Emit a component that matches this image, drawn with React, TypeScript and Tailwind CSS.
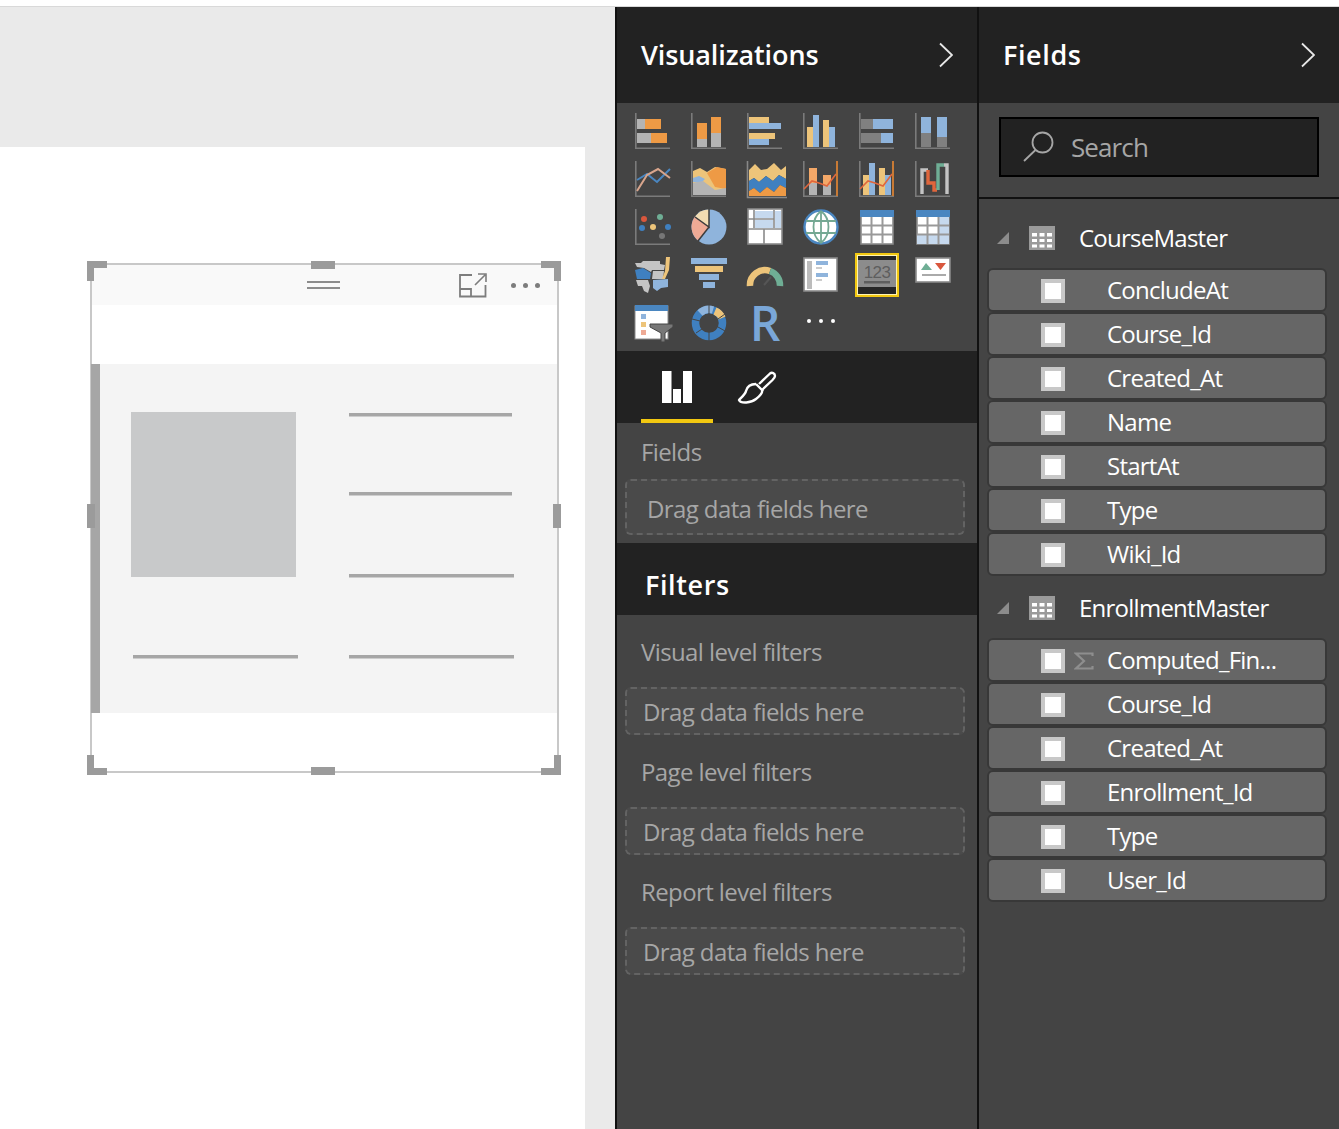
import React from "react";

const Axes = ({ w = 35 }: { w?: number }) => (
  <path d={`M0.8 0V35.2H${w}`} fill="none" stroke="#7b7b7b" strokeWidth="1.6" />
);

const Y = "#edc47a", B = "#8fb4dc", O = "#ee9a45", G = "#b4b4b4", D = "#808080", S = "#eeaa95", BL = "#3f80c0";

const icons: React.ReactNode[] = [
  <><Axes /><rect x="2" y="6" width="24" height="10" fill={O} /><rect x="2" y="6" width="8" height="10" fill={G} /><rect x="2" y="20" width="30" height="10" fill={O} /><rect x="2" y="20" width="14" height="10" fill={G} /></>,
  <><Axes /><rect x="6" y="10" width="10" height="24" fill={O} /><rect x="6" y="26" width="10" height="8" fill={G} /><rect x="20" y="4" width="10" height="30" fill={O} /><rect x="20" y="20" width="10" height="14" fill={G} /></>,
  <><Axes /><rect x="2" y="4" width="20" height="6" fill={Y} /><rect x="2" y="10" width="32" height="6" fill={B} /><rect x="2" y="20" width="26" height="6" fill={Y} /><rect x="2" y="26" width="20" height="6" fill={B} /></>,
  <><Axes /><rect x="4" y="14" width="6" height="20" fill={Y} /><rect x="10" y="2" width="6" height="32" fill={B} /><rect x="20" y="7" width="6" height="27" fill={Y} /><rect x="26" y="14" width="6" height="20" fill={B} /></>,
  <><Axes /><rect x="2" y="6" width="32" height="10" fill={B} /><rect x="2" y="6" width="12" height="10" fill={D} /><rect x="2" y="20" width="32" height="10" fill={B} /><rect x="2" y="20" width="20" height="10" fill={D} /></>,
  <><Axes /><rect x="6" y="4" width="10" height="30" fill={B} /><rect x="6" y="20" width="10" height="14" fill={D} /><rect x="22" y="4" width="10" height="30" fill={B} /><rect x="22" y="24" width="10" height="10" fill={D} /></>,

  <><Axes /><polyline points="2,19 12,13 22,21 35,8" fill="none" stroke="#4a86c0" strokeWidth="2" /><polyline points="2,30 12,14 23,8 35,17" fill="none" stroke="#d8a58c" strokeWidth="2" /></>,
  <><Axes /><polygon points="2,10 9,7 16,11 24,6 35,8 35,34 2,34" fill={Y} /><polygon points="16,12 26,6 35,8 35,28 24,26" fill={O} /><polygon points="2,17 8,15 14,18 10,22 2,21" fill={B} /><polygon points="2,22 12,20 24,29 35,27 35,34 2,34" fill={G} /></>,
  <><path d="M0.5 0V36.5H40" fill="none" stroke="#888" strokeWidth="1.6" /><polygon points="2,9 8,3 14,9 20,8 27,2 34,9 39,5 39,18 32,14 26,20 19,15 12,21 7,17 2,20" fill={Y} /><polygon points="2,20 7,17 12,21 19,15 26,20 32,14 39,18 39,27 33,24 27,31 20,26 13,32 7,27 2,30" fill={BL} /><polygon points="2,30 7,27 13,32 20,26 27,31 33,24 39,27 39,35 2,35" fill={O} /></>,
  <><Axes /><rect x="6" y="7" width="8" height="27" fill="#f4a868" /><rect x="6" y="22" width="8" height="12" fill={G} /><rect x="20" y="14" width="8" height="20" fill="#f4a868" /><rect x="20" y="24" width="8" height="10" fill={G} /><polyline points="1,28 9,20 16,22 24,25 33,13" fill="none" stroke="#e0663c" strokeWidth="1.6" /><rect x="33" y="0" width="2" height="35" fill="#c87a35" /></>,
  <><Axes /><rect x="4" y="14" width="6" height="20" fill={Y} /><rect x="10" y="2" width="6" height="32" fill={B} /><rect x="20" y="7" width="6" height="27" fill={Y} /><rect x="26" y="14" width="6" height="20" fill={B} /><polyline points="1,28 9,20 16,22 24,25 33,13" fill="none" stroke="#e0663c" strokeWidth="1.6" /><rect x="33" y="0" width="2" height="35" fill="#c87a35" /></>,
  <><Axes /><path d="M7 33V9H13" fill="none" stroke="#c4c4c4" strokeWidth="3.4" /><path d="M13 9V22H19V29H22" fill="none" stroke="#e0663c" strokeWidth="3.4" /><path d="M23 29V4H29" fill="none" stroke="#6fae95" strokeWidth="3.4" /><path d="M29 4H32V33" fill="none" stroke="#c4c4c4" strokeWidth="3.4" /></>,

  <><Axes /><circle cx="9" cy="10" r="3" fill="#d9573d" /><circle cx="25" cy="8" r="3" fill="#6fae95" /><circle cx="18" cy="18" r="3" fill={Y} /><circle cx="33" cy="18" r="3" fill="#3f80c0" /><circle cx="7" cy="19" r="3" fill="#3f80c0" /><circle cx="27" cy="27" r="3" fill="#777" /></>,
  <><circle cx="18" cy="18" r="17.5" fill={B} /><path d="M18 18L4 7.5A17.5 17.5 0 0 1 18 0.5Z" fill="#f2dcb2" /><path d="M18 18L7 31.5A17.5 17.5 0 0 1 4 7.5Z" fill={S} /><path d="M18 0V18L4 8" fill="none" stroke="#3d3d3d" strokeWidth="1.5" /><path d="M18 18L7 32" fill="none" stroke="#3d3d3d" strokeWidth="1.5" /></>,
  <><rect x="1" y="0" width="34" height="35" fill="#fff" stroke="#8a8a8a" strokeWidth="1.6" /><rect x="8" y="2" width="18" height="7" fill="#c6d9ee" /><rect x="8" y="11" width="18" height="8" fill="#c6d9ee" /><rect x="28" y="2" width="6" height="17" fill="#c6d9ee" /><path d="M7 1V19M27 1V19M1 10H27M1 20H35M17 20V35" stroke="#8a8a8a" strokeWidth="1.6" /></>,
  <><circle cx="18" cy="18" r="16.5" fill="#fff" stroke="#4a86c0" strokeWidth="2.4" /><path d="M3 12H33M3 24H33M18 2V34M18 2C8 10 8 26 18 34M18 2C28 10 28 26 18 34" fill="none" stroke="#74a893" strokeWidth="1.8" /></>,
  <><rect x="2" y="2" width="32" height="33" fill="#fff" stroke="#8a8a8a" strokeWidth="1.6" /><rect x="1" y="1" width="34" height="7" fill="#4a86c0" /><path d="M12.5 8V35M23.5 8V35M2 16.5H34M2 25.5H34" stroke="#999" strokeWidth="2" /></>,
  <><rect x="2" y="2" width="32" height="33" fill="#fff" stroke="#8a8a8a" strokeWidth="1.6" /><rect x="24" y="8" width="10" height="27" fill="#c6d9ee" /><rect x="2" y="26" width="32" height="9" fill="#c6d9ee" /><rect x="1" y="1" width="34" height="7" fill="#4a86c0" /><path d="M12.5 8V35M23.5 8V35M2 16.5H34M2 25.5H34" stroke="#999" strokeWidth="2" /></>,

  <><polygon points="0,6 6,6 8,4 25,4 25,7 30,8 29,13 17,13 16,15 9,11 2,10" fill="#c4c4c4" /><polygon points="0,13 8,11 16,16 15,22 2,22" fill={BL} /><polygon points="18,14 29,14 28,22 17,22" fill="#c4c4c4" /><polygon points="31,0 35,0 34,13 30,22 27,22 30,14" fill={Y} /><polygon points="1,23 13,23 15,29 13,36 9,34 7,29 3,29" fill="#c4c4c4" /><polygon points="18,23 33,22 33,30 26,31 22,34 18,31" fill={B} /></>,
  <><rect x="0" y="1" width="36" height="6" fill={B} /><rect x="4" y="9" width="28" height="6" fill={Y} /><rect x="8" y="17" width="20" height="6" fill={B} /><rect x="12" y="25" width="12" height="6" fill={B} /></>,
  <><path d="M3 29A15 15 0 0 1 23 14" fill="none" stroke={Y} strokeWidth="6.5" /><path d="M23 14A15 15 0 0 1 33 29" fill="none" stroke="#6fae95" strokeWidth="6.5" /><path d="M17 28L24 20" stroke="#555" strokeWidth="2" /></>,
  <><rect x="1" y="1" width="33" height="33" fill="#fff" stroke="#8a8a8a" strokeWidth="1.6" /><rect x="4" y="4" width="5" height="28" fill="#bcbcbc" /><rect x="13" y="4" width="12" height="4" fill={B} /><rect x="13" y="10" width="6" height="2" fill="#ccc" /><rect x="13" y="16" width="12" height="4" fill={B} /><rect x="13" y="22" width="6" height="2" fill="#ccc" /></>,
  null,
  <><rect x="1" y="1" width="34" height="24" fill="#fff" stroke="#8a8a8a" strokeWidth="1.6" /><polygon points="6,13 11,6 17,13" fill="#6fae95" /><polygon points="20,6 31,6 25.5,13" fill="#d9573d" /><rect x="7" y="17" width="24" height="2" fill="#aaa" /></>,

  <><rect x="0" y="1" width="33" height="33" fill="#fff" stroke="#8a8a8a" strokeWidth="1" /><rect x="0" y="0" width="33" height="6" fill="#4a86c0" /><rect x="6" y="9" width="5" height="5" fill={B} /><rect x="6" y="17" width="5" height="5" fill={Y} /><rect x="6" y="25" width="5" height="5" fill={S} /><polygon points="15,19 38,19 38,22 30,28 30,37 26,37 26,28 15,22" fill="#777" stroke="#444" strokeWidth="1" /></>,
  <><circle cx="18" cy="18" r="13.5" fill="none" stroke={BL} strokeWidth="7.5" /><path d="M9 8A13.5 13.5 0 0 1 22 5" fill="none" stroke={B} strokeWidth="7.5" /><path d="M24 6A13.5 13.5 0 0 1 31 13" fill="none" stroke={Y} strokeWidth="7.5" /><path d="M18 0V9M34 9L27 14M34 26L27 22M18 36V27M5 28L11 24M1 14L9 16" stroke="#444" strokeWidth="1" /></>,
];

const Dots = ({ color, size, gap }: { color: string; size: string; gap: string }) => (
  <span className={`flex ${gap}`}>
    <span className={`${size} rounded-full ${color}`} />
    <span className={`${size} rounded-full ${color}`} />
    <span className={`${size} rounded-full ${color}`} />
  </span>
);

const VizCell = ({ i }: { i: number }) => {
  if (i === 22) {
    return (
      <div className="w-[56px] h-[48px] flex items-center justify-center">
        <div className="w-[44px] h-[44px] border-2 border-[#f2c811] bg-[#fff3b0] p-px">
          <svg width="38" height="38" viewBox="0 0 38 38" className="block">
            <rect width="38" height="38" fill="#262626" />
            <rect y="4" width="38" height="27" fill="#8c8c8c" />
            <text x="19" y="22" textAnchor="middle" fontSize="17" fontFamily="'Liberation Sans', sans-serif" fill="#5e5e5e">123</text>
            <rect x="6" y="25" width="26" height="2.5" fill="#5e5e5e" />
          </svg>
        </div>
      </div>
    );
  }
  if (i === 26) {
    return (
      <div className="w-[56px] h-[48px] flex items-center justify-center">
        <span className="text-[#7aa7d8] text-[48px] leading-none font-semibold tracking-normal">R</span>
      </div>
    );
  }
  if (i === 27) {
    return (
      <div className="w-[56px] h-[48px] flex items-center justify-center pb-[4px]">
        <Dots color="bg-white" size="w-[4px] h-[4px]" gap="gap-[8px]" />
      </div>
    );
  }
  return (
    <div className="w-[56px] h-[48px] flex items-center justify-center">
      <svg width="40" height="40" viewBox="-2 -2 40 40" className="overflow-visible">{icons[i]}</svg>
    </div>
  );
};

const Chevron = () => (
  <svg width="14" height="26" viewBox="0 0 14 26"><path d="M1 1.5L13 13L1 24.5" fill="none" stroke="#e8e8e8" strokeWidth="1.8" /></svg>
);

const Header = ({ title, track }: { title: string; track: string }) => (
  <div className="h-[96px] bg-[#222222] flex items-center justify-between">
    <span className={`text-white text-[27px] font-semibold leading-none pb-[2px] ${track}`}>{title}</span>
    <Chevron />
  </div>
);

const Drop = ({ h, pl, pt }: { h: string; pl: string; pt: string }) => (
  <div className={`${h} ${pl} ${pt} w-[340px] ml-[8px] flex items-center border-2 border-dashed border-[#636363] rounded-[6px] bg-[#4a4a4a] text-[#a6a6a6] text-[24px] leading-none`}>
    Drag data fields here
  </div>
);

const Muted = ({ children, h }: { children: string; h: string }) => (
  <div className={`${h} pl-[24px] flex items-center text-[#a6a6a6] text-[24px] leading-none`}>{children}</div>
);

const TableIcon = () => (
  <svg width="26" height="24" viewBox="0 0 26 24">
    <rect width="26" height="24" fill="#9a9a9a" />
    <path d="M3 7H8V10.5H3ZM10.5 7H15.5V10.5H10.5ZM18 7H23V10.5H18ZM3 13H8V16H3ZM10.5 13H15.5V16H10.5ZM18 13H23V16H18ZM3 18.5H8V21.5H3ZM10.5 18.5H15.5V21.5H10.5ZM18 18.5H23V21.5H18Z" fill="#fff" />
  </svg>
);

const Group = ({ name, rows, head }: { name: string; head: string; rows: { label: string; sigma?: boolean }[] }) => (
  <div>
    <div className={`${head} flex items-center`}>
      <svg width="12" height="12" viewBox="0 0 12 12" className="ml-[18px]"><polygon points="12,0 12,12 0,12" fill="#8c8c8c" /></svg>
      <span className="ml-[20px] flex"><TableIcon /></span>
      <span className="ml-[24px] text-white text-[24px] leading-none tracking-[-0.75px]">{name}</span>
    </div>
    <div className="flex flex-col">
      {rows.map((r) => (
        <div key={r.label} className="h-[44px] ml-[8px] w-[340px] border-2 border-[#383838] rounded-[6px] bg-[#666666] flex items-center">
          <span className="ml-[52px] mt-[2px] w-[24px] h-[24px] bg-white border-[4px] border-[#c8c8c8] shrink-0" />
          {r.sigma && (
            <svg width="20" height="18" viewBox="0 0 20 18" className="ml-[9px] mt-[2px] shrink-0"><path d="M18.5 4V1.5H2L10 9L2 16.5H18.5V14" fill="none" stroke="#8e8e8e" strokeWidth="2.2" /></svg>
          )}
          <span className={`${r.sigma ? "ml-[13px]" : "ml-[42px]"} text-white text-[24px] leading-none whitespace-nowrap tracking-[-0.75px]`}>{r.label}</span>
        </div>
      ))}
    </div>
  </div>
);

export default function App() {
  return (
    <div className="w-[1339px] h-[1129px] overflow-hidden flex flex-col bg-white font-['Open_Sans',sans-serif] tracking-[-0.6px]">
      <div className="h-[7px] shrink-0 bg-white border-b border-[#d9d9d9]" />
      <div className="flex flex-1 min-h-0">
        {/* Canvas */}
        <div className="w-[615px] shrink-0 bg-[#eaeaea] pt-[140px]">
          <div className="w-[585px] h-[982px] bg-white pt-[116px] pl-[90px]">
            <div className="relative w-[469px] h-[510px] border-2 border-[#c8c8c8] bg-white">
              <div className="h-[40px] bg-[#f9f9f9] relative">
                <span className="absolute left-[215px] top-[16px] w-[33px] h-[8px] border-y-2 border-[#8c8c8c]" />
                <svg width="30" height="26" viewBox="0 0 30 26" className="absolute left-[366px] top-[7px]">
                  <path d="M14 3H2V24.5H27.5V13" fill="none" stroke="#7d7d7d" strokeWidth="1.8" />
                  <path d="M2 17H13V24.5" fill="none" stroke="#7d7d7d" strokeWidth="1.8" />
                  <path d="M17 13L27 3M20 2H28V10" fill="none" stroke="#7d7d7d" strokeWidth="1.6" />
                </svg>
                <span className="absolute left-[419px] top-[18px]">
                  <Dots color="bg-[#7d7d7d]" size="w-[5px] h-[5px]" gap="gap-[7px]" />
                </span>
              </div>
              <div className="h-[59px]" />
              <svg width="465" height="349" viewBox="0 0 465 349" className="block overflow-visible">
                <rect width="465" height="349" fill="#f4f4f4" />
                <rect x="-1" width="9" height="349" fill="#a6a6a6" />
                <rect x="39" y="48" width="165" height="165" fill="#c8c9ca" />
                <rect x="257" y="49" width="163" height="3.5" fill="#a6a6a6" />
                <rect x="257" y="128" width="163" height="3.5" fill="#a6a6a6" />
                <rect x="257" y="210" width="165" height="3.5" fill="#a6a6a6" />
                <rect x="41" y="291" width="165" height="3.5" fill="#a6a6a6" />
                <rect x="257" y="291" width="165" height="3.5" fill="#a6a6a6" />
              </svg>
              <span className="absolute -left-[5px] -top-[4px] w-[20px] h-[20px] bg-[#9b9b9b] [clip-path:polygon(0_0,100%_0,100%_35%,35%_35%,35%_100%,0_100%)]" />
              <span className="absolute -right-[4px] -top-[4px] w-[20px] h-[20px] bg-[#9b9b9b] [clip-path:polygon(0_0,100%_0,100%_100%,65%_100%,65%_35%,0_35%)]" />
              <span className="absolute -left-[5px] -bottom-[4px] w-[20px] h-[20px] bg-[#9b9b9b] [clip-path:polygon(0_0,35%_0,35%_65%,100%_65%,100%_100%,0_100%)]" />
              <span className="absolute -right-[4px] -bottom-[4px] w-[20px] h-[20px] bg-[#9b9b9b] [clip-path:polygon(65%_0,100%_0,100%_100%,0_100%,0_65%,65%_65%)]" />
              <span className="absolute left-[219px] -top-[4px] w-[24px] h-[8px] bg-[#9b9b9b]" />
              <span className="absolute left-[219px] -bottom-[4px] w-[24px] h-[8px] bg-[#9b9b9b]" />
              <span className="absolute -left-[5px] top-[239px] w-[8px] h-[24px] bg-[#9b9b9b]" />
              <span className="absolute -right-[4px] top-[239px] w-[8px] h-[24px] bg-[#9b9b9b]" />
            </div>
          </div>
        </div>

        {/* Visualizations */}
        <div className="w-[364px] shrink-0 border-x-2 border-[#111111] bg-[#444444] flex flex-col">
          <div className="pl-[24px] pr-[24px] bg-[#222222]"><Header title="Visualizations" track="tracking-[-0.1px]" /></div>
          <div className="h-[248px] pt-[4px] pl-[8px] grid grid-cols-[repeat(6,56px)] auto-rows-[48px]">
            {Array.from({ length: 28 }, (_, i) => (
              <VizCell key={i} i={i} />
            ))}
          </div>
          <div className="h-[72px] bg-[#222222] flex items-stretch pl-[24px]">
            <div className="w-[72px] border-b-[4px] border-[#f2c811] flex items-center justify-center pt-[4px]">
              <svg width="32" height="34" viewBox="0 0 32 34">
                <path d="M1 1H10.5V33H1ZM12 19H20V33H12ZM22 1H31V33H22Z" fill="#fff" />
              </svg>
            </div>
            <div className="w-[72px] flex items-center justify-center pl-[16px] pt-[2px]">
              <svg width="40" height="36" viewBox="0 0 40 36" fill="none" stroke="#fff" strokeWidth="2.4" strokeLinejoin="round">
                <path d="M22 14L33 3.5C35 2 38 3 38 6C38 7.5 37 8.5 35.5 10L25 20" />
                <path d="M19 14L26 21" />
                <path d="M19 14C13 14 10 17 9 21C8.5 24 5 27 2 30C4 34 14 33 19 29C23 26 26 23 25 20" />
              </svg>
            </div>
          </div>
          <Muted h="h-[56px] pt-[2px]">Fields</Muted>
          <Drop h="h-[56px]" pl="pl-[20px]" pt="pt-[3px]" />
          <div className="h-[8px] shrink-0" />
          <div className="h-[72px] shrink-0 bg-[#222222] pl-[28px] pt-[10px] flex items-center text-white text-[27px] font-semibold leading-none tracking-[0.6px]">Filters</div>
          <Muted h="h-[72px] pt-[2px]">Visual level filters</Muted>
          <Drop h="h-[48px]" pl="pl-[16px]" pt="pt-[2px]" />
          <Muted h="h-[72px] pt-[2px]">Page level filters</Muted>
          <Drop h="h-[48px]" pl="pl-[16px]" pt="pt-[2px]" />
          <Muted h="h-[72px] pt-[2px]">Report level filters</Muted>
          <Drop h="h-[48px]" pl="pl-[16px]" pt="pt-[2px]" />
        </div>

        {/* Fields */}
        <div className="flex-1 min-w-0 bg-[#444444]">
          <div className="pl-[24px] pr-[24px] bg-[#222222]"><Header title="Fields" track="tracking-[0.6px]" /></div>
          <div className="h-[96px] border-b-2 border-[#111111] pl-[20px] pt-[14px]">
            <div className="w-[320px] h-[60px] border-2 border-black bg-[#222222] flex items-center">
              <svg width="34" height="34" viewBox="0 0 34 34" fill="none" stroke="#a6a6a6" strokeWidth="1.8" className="ml-[21px]">
                <circle cx="20.5" cy="12.5" r="10" />
                <path d="M13.5 20L2 31" />
              </svg>
              <span className="ml-[15px] text-[#a6a6a6] text-[26px] leading-none tracking-[-0.9px]">Search</span>
            </div>
          </div>
          <Group name="CourseMaster" head="h-[69px] pt-[8px]" rows={[{ label: "ConcludeAt" }, { label: "Course_Id" }, { label: "Created_At" }, { label: "Name" }, { label: "StartAt" }, { label: "Type" }, { label: "Wiki_Id" }]} />
          <Group name="EnrollmentMaster" head="h-[62px] pt-[2px]" rows={[{ label: "Computed_Fin...", sigma: true }, { label: "Course_Id" }, { label: "Created_At" }, { label: "Enrollment_Id" }, { label: "Type" }, { label: "User_Id" }]} />
        </div>
      </div>
    </div>
  );
}
